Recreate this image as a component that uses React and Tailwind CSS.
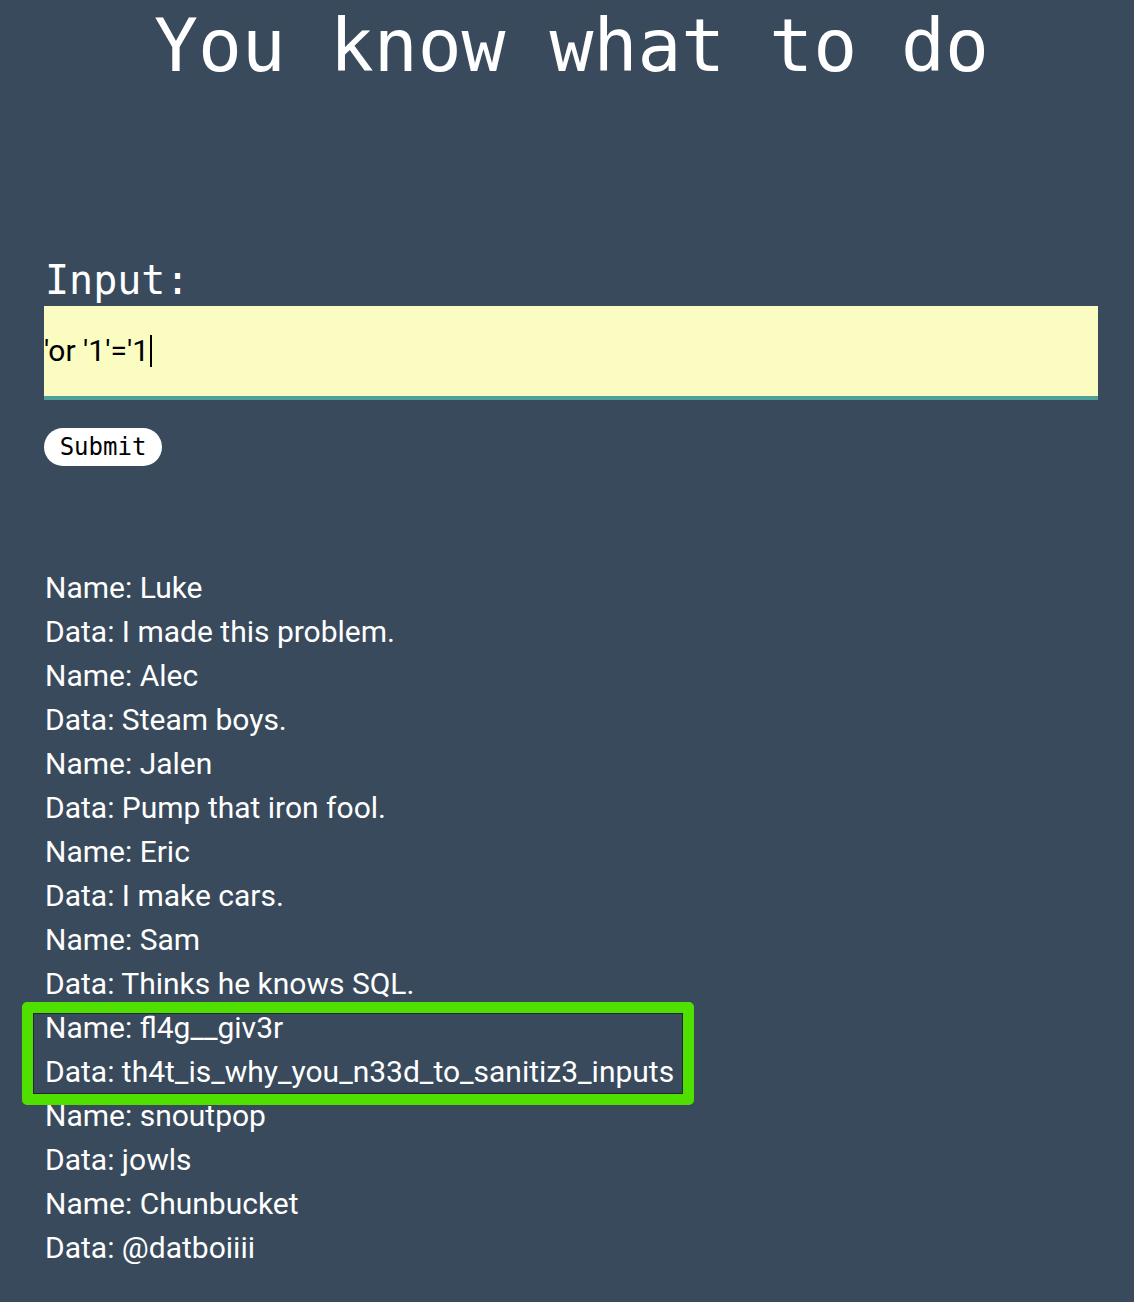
export default function App() {
  const rows = [
    ["Name: Luke", "Data: I made this problem."],
    ["Name: Alec", "Data: Steam boys."],
    ["Name: Jalen", "Data: Pump that iron fool."],
    ["Name: Eric", "Data: I make cars."],
    ["Name: Sam", "Data: Thinks he knows SQL."],
    ["Name: fl4g__giv3r", "Data: th4t_is_why_you_n33d_to_sanitiz3_inputs"],
    ["Name: snoutpop", "Data: jowls"],
    ["Name: Chunbucket", "Data: @datboiiii"],
  ];
  return (
    <div className="min-h-[1302px] w-full bg-[#394a5c] text-white overflow-hidden">
      <h1 className="pt-[2px] pl-[9px] text-center text-[73px] leading-[88px] font-['DejaVu_Sans_Mono',monospace] font-normal">
        You know what to do
      </h1>
      <div className="px-[44px] pt-[165px]">
        <div className="text-[40px] leading-[50px] font-['DejaVu_Sans_Mono',monospace] pl-[1px]">Input:</div>
        <div className="mt-[1px] w-[1054px] h-[94px] bg-[#fafcc2] border-b-[4px] border-[#4fa096] flex items-center">
          <span className="text-black text-[30px] font-['Roboto',sans-serif] leading-none">'or '1'='1</span>
          <span className="w-[2px] h-[32px] bg-black ml-[1px]"></span>
        </div>
        <button className="mt-[28px] h-[38px] w-[118px] rounded-full bg-white text-black text-[24px] font-['DejaVu_Sans_Mono',monospace] leading-none flex items-center justify-center">
          Submit
        </button>
        <div className="mt-[100px] font-['Roboto',sans-serif] text-[30px] leading-[44px]">
          {rows.map(([n, d], i) => (
            <div key={i} className="relative">
              {i === 5 && (
                <div className="absolute left-[-22px] top-[-4px] w-[672px] h-[103px] rounded-[5px] border-[11px] border-[#4fe000] pointer-events-none">
                  <div className="w-full h-full border border-[#1e2a36]"></div>
                </div>
              )}
              <div className="pl-[1px]">{n}</div>
              <div className="pl-[1px]">{d}</div>
            </div>
          ))}
        </div>
      </div>
    </div>
  );
}
